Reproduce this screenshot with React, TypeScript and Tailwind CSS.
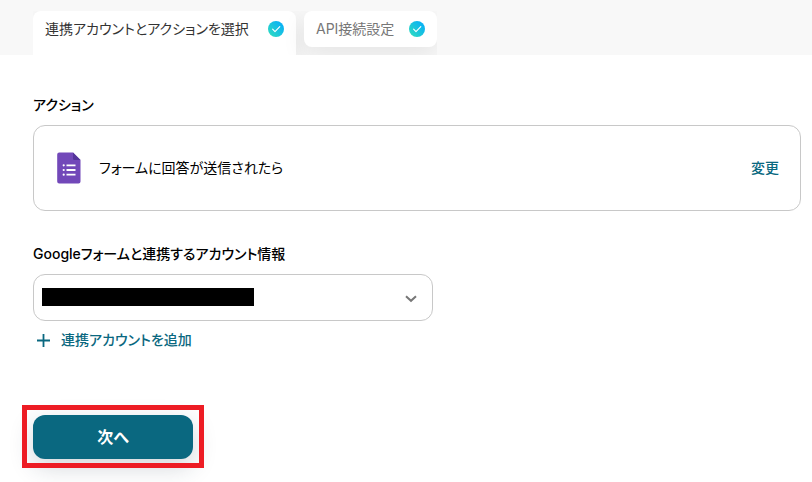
import { useState } from 'react'

const tabs = [
  { id: 'account', label: '連携アカウントとアクションを選択' },
  { id: 'api', label: 'API接続設定' },
]

const CheckBadge = () => (
  <svg className="h-4 w-4 shrink-0" viewBox="0 0 16 16" fill="none" aria-hidden="true">
    <defs>
      <linearGradient id="badge" x1="1" y1="15" x2="14" y2="3" gradientUnits="userSpaceOnUse">
        <stop stopColor="#2fdcc0" />
        <stop offset="1" stopColor="#09b1f5" />
      </linearGradient>
    </defs>
    <circle cx="8" cy="8" r="8" fill="url(#badge)" />
    <path d="M4.6 8.2l2.4 2.4 4.8-5" stroke="#fff" strokeWidth="1.1" strokeLinecap="round" strokeLinejoin="round" />
  </svg>
)

const FormsIcon = () => (
  <svg className="h-8 w-6 shrink-0" viewBox="0 0 24 32" aria-hidden="true">
    <path d="M2.2 0.5H16l7.5 7.5v21.6a2 2 0 0 1-2 2H2.2a2 2 0 0 1-2-2V2.5a2 2 0 0 1 2-2z" fill="#7248b9" />
    <path d="M16 0.5L23.5 8H17.5A1.5 1.5 0 0 1 16 6.5z" fill="#54359a" />
    <g fill="#fff">
      <circle cx="6.7" cy="13.3" r="1.1" />
      <circle cx="6.7" cy="18" r="1.1" />
      <circle cx="6.7" cy="22.7" r="1.1" />
      <path d="M9.5 12.4h9v1.8h-9zM9.5 17.1h9v1.8h-9zM9.5 21.8h9v1.8h-9z" />
    </g>
  </svg>
)

export default function App() {
  const [activeTab, setActiveTab] = useState('account')

  return (
    <div className="min-h-screen overflow-hidden bg-white font-['Inter','Noto_Sans_CJK_JP',sans-serif] text-sm text-black [font-feature-settings:'palt']">
      <header className="bg-[#f8f8f8] pt-[11px] pl-[33px]">
        <div role="tablist" className="flex h-11 w-fit items-start gap-2 overflow-hidden">
          {tabs.map((tab) => (
            <button
              key={tab.id}
              type="button"
              role="tab"
              aria-selected={activeTab === tab.id}
              onClick={() => setActiveTab(tab.id)}
              className={
                activeTab === tab.id
                  ? 'flex h-11 min-w-[263px] items-center justify-between gap-3 rounded-t-lg bg-white px-3 pb-2 text-[#333] shadow-[0_8px_24px_rgba(0,0,0,0.08)]'
                  : 'flex h-9 min-w-[133px] items-center justify-between gap-3 rounded-lg bg-white px-3 text-[#777] shadow-[0_8px_24px_rgba(0,0,0,0.08)]'
              }
            >
              {tab.label}
              <CheckBadge />
            </button>
          ))}
        </div>
      </header>

      <main className="pt-10 pr-[11px] pl-[33px]">
        <h2 className="font-medium">アクション</h2>
        <div className="mt-[10px] flex h-[86px] items-center rounded-xl border border-[#c8c8c8] pr-[21px] pl-[23px]">
          <FormsIcon />
          <p className="ml-[18px] flex-1">フォームに回答が送信されたら</p>
          <button type="button" className="font-medium text-[#0a6880]">
            変更
          </button>
        </div>

        <label htmlFor="account" className="mt-[33px] block font-medium">
          Googleフォームと連携するアカウント情報
        </label>
        <div className="relative mt-[10px] w-full max-w-[400px]">
          <select
            id="account"
            className="block h-[47px] w-full appearance-none rounded-xl border border-[#c8c8c8] bg-white px-2"
          >
            <option value=""></option>
          </select>
          {/* account name is masked */}
          <span className="pointer-events-none absolute top-[14px] left-[9px] h-[18px] w-[212px] bg-black" />
          <svg
            className="pointer-events-none absolute top-[18px] right-4 h-3 w-3"
            viewBox="0 0 12 12"
            fill="none"
            stroke="#777"
            strokeWidth="2"
            aria-hidden="true"
          >
            <path d="M1 4.2l5 4.6 5-4.6" />
          </svg>
        </div>

        <button type="button" className="mt-[9px] ml-1 flex items-center gap-[11px] font-medium text-[#0a6880]">
          <svg className="h-[13px] w-[13px]" viewBox="0 0 13 13" stroke="currentColor" strokeWidth="1.8" aria-hidden="true">
            <path d="M6.5 0v13M0 6.5h13" />
          </svg>
          連携アカウントを追加
        </button>

        <div className="relative mt-[65px] w-40">
          <button
            type="button"
            className="h-11 w-full rounded-xl bg-[#0a6880] text-base font-bold text-white shadow-[0_8px_24px_rgba(30,50,70,0.2)]"
          >
            次へ
          </button>
          <span className="pointer-events-none absolute -inset-x-[11px] -top-[10px] -bottom-[9px] border-5 border-[#ed1c24]" />
        </div>
      </main>
    </div>
  )
}
